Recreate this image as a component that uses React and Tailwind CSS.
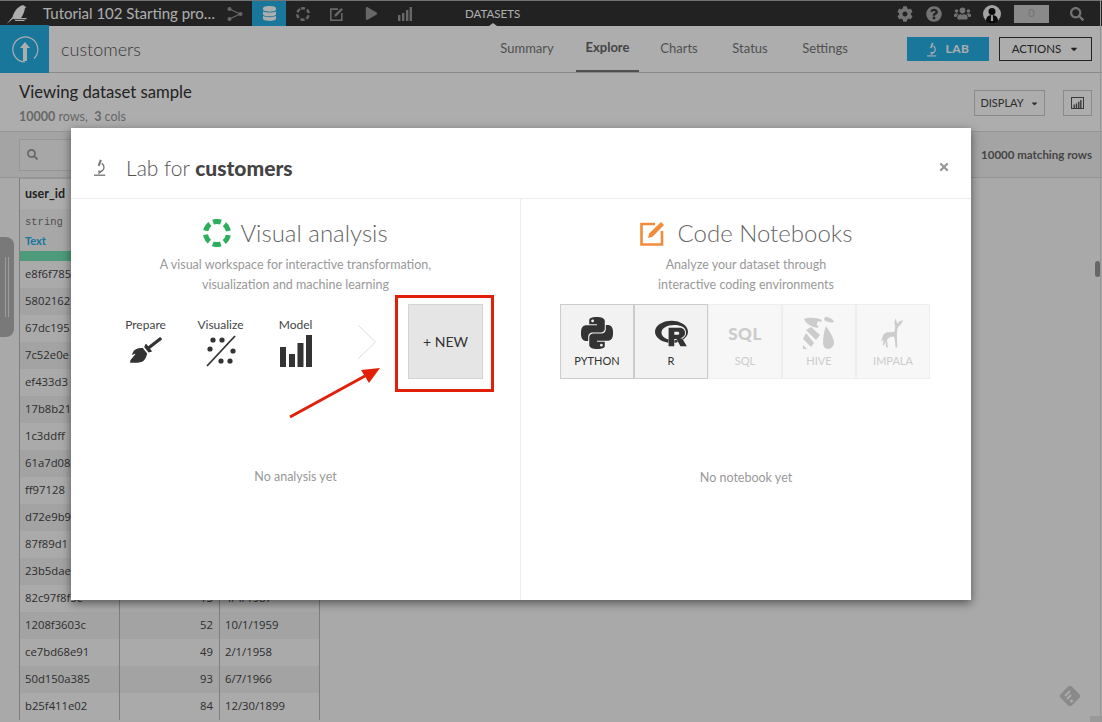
import React from "react";
import { FaDatabase, FaCog, FaQuestionCircle, FaUsers, FaSearch, FaBroom, FaPlay, FaCaretDown, FaTimes } from "react-icons/fa";
import { SiPython, SiR } from "react-icons/si";

const Micro = ({ className }) => (
  <svg viewBox="0 0 14 20" className={className} fill="none" stroke="currentColor" strokeWidth="1.6">
    <path d="M0 19h13" />
    <path d="M8 1 5.5 8" strokeWidth="2.4" />
    <path d="M9 5c3.2 2.2 3.4 6.400 1 8.500-1.500 1.300-3.500 1.300-5 .4" />
    <path d="M5 17c1.500-.6 3-1.500 4-3" />
  </svg>
);

const Ring = ({ className, color = "currentColor", width = 5 }) => (
  <svg viewBox="0 0 28 28" className={className} fill="none" stroke={color} strokeWidth={width}>
    <circle cx="14" cy="14" r="11.500" strokeDasharray="8 4.040" transform="rotate(-110 14 14)" />
  </svg>
);

const Note = ({ className, frame, pen, w = 2.6 }) => (
  <svg viewBox="0 0 26 26" className={className} fill="none">
    <path d="M15 4H1.500v20.500H22V11" stroke={frame} strokeWidth={w} />
    <path d="M8 18l1.200-4.500L21 2l3 3L12.500 16.800z" fill={pen} />
  </svg>
);

const Bars = ({ className }) => (
  <svg viewBox="0 0 32 32" className={className} fill="currentColor">
    <rect x="0" y="12" width="6" height="20" />
    <rect x="9" y="19" width="6" height="13" />
    <rect x="17.500" y="8" width="6" height="24" />
    <rect x="26" y="0" width="6" height="32" />
  </svg>
);

const Hive = ({ className }) => (
  <svg viewBox="0 0 32 32" className={className} fill="currentColor">
    <path d="M1 2c5-2 13-1.500 18 1l-4.500 8C9 10 3 7 1 2z" />
    <path d="M22 0c4 0 8 2 9 5-3 1-7 0-10-2z" />
    <path d="M23 9c4 6 8 12 8 17 0 3-3 6-6 6s-5-3-5-6c0-5 1-12 3-17z" />
    <path d="M3 13l5-3 9 8-4 5zM0 22l3-6 8 10-3 4zM0 28l4 4H0z" />
    <path d="M15 4l3 1-1.500 4-3-.8z" fill="#f7f7f7" />
  </svg>
);

const Impala = ({ className }) => (
  <svg viewBox="0 0 28 34" className={className} fill="currentColor">
    <path d="M17 0l2 6 3-3 4-1-3 5-3 3-1 3-.5 6 .5 15h-2l-1-10-1-3-5 1-3 3 1 9H6l-1-7-2 5-1-1 1-6-3 2 2-6c1-3 3-5 6-5 3 0 6 .5 8-1l.5-6-1-4z" />
  </svg>
);

const Flow = ({ className }) => (
  <svg viewBox="0 0 16 14" className={className} fill="none" stroke="currentColor" strokeWidth="1.200">
    <path d="M2.500 2 L13 7 L2.500 12" />
    <circle cx="2.500" cy="2" r="2" fill="currentColor" stroke="none" />
    <circle cx="13.500" cy="7" r="2" fill="currentColor" stroke="none" />
    <circle cx="2.500" cy="12" r="2" fill="currentColor" stroke="none" />
  </svg>
);

const TinyBars = ({ className }) => (
  <svg viewBox="0 0 14 14" className={className} fill="currentColor">
    <rect x="0" y="8" width="2.400" height="6" />
    <rect x="4" y="6" width="2.400" height="8" />
    <rect x="8" y="3" width="2.400" height="11" />
    <rect x="11.600" y="0" width="2.400" height="14" />
  </svg>
);

const Bird = ({ className }) => (
  <svg viewBox="0 0 22 20" className={className} fill="currentColor">
    <path d="M0 20 6 13c1-4 4-9 8-11 1.500-1 3.500-1 4.500.5L20 3l-1.500 1c-.5 3-1.500 6-3 8.500l-1 1.500h5.500v1.300H7.500L6.800 14.500z" />
    <path d="M9 16h9v1H8z" />
  </svg>
);

const Avatar = () => (
  <svg viewBox="0 0 18 18" className="w-[18px] h-[18px]">
    <circle cx="9" cy="9" r="9" fill="#f0f0f0" />
    <circle cx="9" cy="6.500" r="3.500" fill="#111" />
    <path d="M3 16c0-4 2.500-6 6-6s6 2 6 6l-3 2H6z" fill="#111" />
    <path d="M8.200 10h1.600l.4 6h-2.400z" fill="#f0f0f0" />
  </svg>
);

const rows = [
  ["e8f6f785"], ["5802162"], ["67dc195"], ["7c52e0e"], ["ef433d3"], ["17b8b21"], ["1c3ddff"], ["61a7d08"],
  ["ff97128"], ["d72e9b9"], ["87f89d1"], ["23b5dae"],
  ["82c97f8f5c", "13", "4/4/1987"], ["1208f3603c", "52", "10/1/1959"], ["ce7bd68e91", "49", "2/1/1958"],
  ["50d150a385", "93", "6/7/1966"], ["b25f411e02", "84", "12/30/1899"],
];

function Tile({ children, active }) {
  return (
    <div className={`w-[34px] h-full flex items-center justify-center ${active ? "bg-[#26b0e6] text-white" : "text-[#999]"}`}>
      {children}
    </div>
  );
}

function Tab({ w, active, children }) {
  return (
    <div className={`${w} h-full flex items-center justify-center text-[13px] ${active ? "font-bold text-[#666] border-b-2 border-[#777]" : "text-[#777]"}`}>
      {children}
    </div>
  );
}

function Kernel({ label, on, children }) {
  return (
    <div className={`w-[74px] h-[75px] flex flex-col items-center pt-[10px] ${on ? "bg-[#f2f2f2] border border-[#ccc] text-[#333]" : "bg-[#f7f7f7] border border-[#eee] text-[#ccc]"}`}>
      <div className="h-[36px] flex items-center justify-center">{children}</div>
      <div className="mt-[3px] text-[11px] leading-[14px]">{label}</div>
    </div>
  );
}

export default function App() {
  return (
    <div className="relative w-[1102px] h-[722px] overflow-hidden bg-[#fafafa] font-['Lato','Open_Sans',sans-serif]">
      <div className="h-[26px] border-t border-[#aaa] bg-[#333] flex items-center">
        <div className="w-[218px] flex items-center h-full">
          <Bird className="ml-[6px] w-[23px] h-[20px] text-white" />
          <span className="ml-[14px] text-[15px] text-white whitespace-nowrap">Tutorial 102 Starting pro…</span>
        </div>
        <Tile><Flow className="w-[16px] h-[14px]" /></Tile>
        <Tile active><FaDatabase className="w-[13px] h-[15px]" /></Tile>
        <Tile><Ring className="w-[14px] h-[14px]" width={5} /></Tile>
        <Tile><Note className="w-[14px] h-[14px]" frame="#999" pen="#999" w={3} /></Tile>
        <Tile><FaPlay className="w-[13px] h-[13px]" /></Tile>
        <Tile><TinyBars className="w-[14px] h-[14px]" /></Tile>
        <div className="relative ml-[43px] h-full flex items-center text-[11.500px] text-white">
          DATASETS
          <div className="absolute left-1/2 -translate-x-1/2 bottom-0 w-0 h-0 border-x-[4px] border-x-transparent border-b-[3px] border-b-white" />
        </div>
        <div className="ml-auto flex items-center h-full text-[#aaa]">
          <FaCog className="w-[16px] h-[16px]" />
          <FaQuestionCircle className="ml-[13px] w-[16px] h-[16px]" />
          <FaUsers className="ml-[12px] w-[17px] h-[15px]" />
          <div className="ml-[12px]"><Avatar /></div>
          <div className="ml-[13px] w-[35px] h-[18px] bg-[#ccc] text-[#aaa] text-[11px] flex items-center justify-center">0</div>
          <FaSearch className="ml-[21px] mr-[18px] w-[14px] h-[14px]" />
        </div>
      </div>

      <div className="h-[47px] flex items-center border-b border-[#ccc] bg-white">
        <div className="w-[49px] h-[48px] bg-[#26b0e6] flex items-center justify-center">
          <svg viewBox="0 0 28 28" className="w-[28px] h-[28px]" fill="none" stroke="#fff" strokeWidth="1.200">
            <path d="M23 23.500A12.500 12.500 0 1 0 14 27" />
            <path d="M14 7l-5 6h3v13h4V13h3z" fill="#fff" stroke="none" />
          </svg>
        </div>
        <span className="ml-[12px] text-[18px] font-light text-[#555]">customers</span>
        <div className="ml-auto h-full flex items-center">
          <div className="flex h-full">
            <Tab w="w-[98px]">Summary</Tab>
            <Tab w="w-[63px]" active>Explore</Tab>
            <Tab w="w-[80px]">Charts</Tab>
            <Tab w="w-[62px]">Status</Tab>
            <Tab w="w-[88px]">Settings</Tab>
          </div>
          <div className="ml-[38px] w-[82px] h-[24px] bg-[#26b0e6] text-white flex items-center justify-center gap-[9px] text-[12px] font-bold tracking-[0.5px]">
            <Micro className="w-[10px] h-[15px]" /> LAB
          </div>
          <div className="ml-[10px] mr-[10px] w-[93px] h-[24px] border border-[#333] text-[#333] flex items-center justify-center gap-[8px] text-[11.500px]">
            ACTIONS <FaCaretDown className="w-[10px] h-[10px]" />
          </div>
        </div>
      </div>

      <div className="h-[58px] flex justify-between pl-[19px] pr-[10px] bg-white">
        <div className="pt-[7px]">
          <div className="text-[16.700px] leading-[24px] text-[#333]">Viewing dataset sample</div>
          <div className="mt-[5px] text-[12.500px] leading-[16px] text-[#999]"><b>10000</b> rows,&nbsp; <b>3</b> cols</div>
        </div>
        <div className="flex items-start pt-[17px]">
          <div className="w-[71px] h-[26px] border border-[#ccc] text-[#444] flex items-center justify-center gap-[6px] text-[11px]">
            DISPLAY <FaCaretDown className="w-[9px] h-[9px]" />
          </div>
          <div className="ml-[18px] w-[29px] h-[26px] border border-[#ccc] flex items-center justify-center">
            <div className="w-[13px] h-[12px] border border-[#555] flex items-end justify-center text-[#555]"><TinyBars className="w-[9px] h-[8px]" /></div>
          </div>
        </div>
      </div>

      <div className="h-[47px] border-y border-[#ddd] bg-[#f2f2f2] flex items-center justify-between pl-[19px] pr-[10px]">
        <div className="w-[200px] h-[32px] border border-[#ddd] bg-[#f7f7f7] flex items-center pl-[7px] text-[#999]">
          <FaSearch className="w-[11px] h-[11px]" />
        </div>
        <span className="text-[11.500px] font-bold text-[#666]">10000 matching rows</span>
      </div>

      <div className="ml-[19px] w-[301px] border-l border-[#bbb]">
        <div className="grid grid-cols-[100px_100px_100px] bg-white">
          <div className="border-r border-[#bbb] h-[73px] border-t border-t-[#ddd]">
            <div className="h-[30px] pl-[5px] flex items-center text-[12.500px] font-bold text-[#333] bg-[#fff]">user_id</div>
            <div className="h-[43px] bg-[#f7f7f7] pl-[5px] pt-[5px]">
              <div className="font-['Liberation_Mono',monospace] text-[10.500px] leading-[16px] text-[#777]">string</div>
              <div className="mt-[2px] text-[11px] font-bold leading-[18px] text-[#26b0e6]">Text</div>
            </div>
          </div>
          <div className="border-r border-[#bbb]" />
          <div className="border-r border-[#bbb]" />
          <div className="col-span-3 h-[10px] bg-[#74e5b6]" />
        </div>
        {rows.map((r, i) => (
          <div key={i} className={`grid grid-cols-[100px_100px_100px] h-[27px] text-[11.300px] leading-[26px] text-[#444] font-['Open_Sans',sans-serif] ${i % 2 ? "bg-[#f0f0f0]" : "bg-[#fbfbfb]"}`}>
            <div className="pl-[5px] border-r border-[#bbb] overflow-hidden">{r[0]}</div>
            <div className="pr-[6px] text-right border-r border-[#bbb]">{r[1]}</div>
            <div className="pl-[5px] border-r border-[#bbb]">{r[2]}</div>
          </div>
        ))}
      </div>

      {/* grip, scrollbar and badge lying over the page */}
      <div className="absolute left-0 top-[237px] w-[14px] h-[100px] bg-[#b3b3b3] rounded-r-[8px] flex justify-center gap-[2px] pt-[20px]">
        <div className="w-px h-[60px] bg-white/70" />
        <div className="w-px h-[60px] bg-white/70" />
      </div>
      <div className="absolute right-[1px] top-0 bottom-0 w-px bg-[#ddd]" />
      <div className="absolute right-[2px] top-[261px] w-[5px] h-[16px] rounded-full bg-[#999]" />
      <div className="absolute right-0 bottom-0 w-[12px] h-[6px] bg-[#e2e2e2]" />
      <svg viewBox="0 0 26 26" className="absolute left-[1057px] top-[683px] w-[26px] h-[26px]">
        <rect x="5" y="5" width="16" height="16" rx="3" transform="rotate(45 13 13)" fill="#ccc" />
        <path d="M8 13l5-5M10 16l4-4" stroke="#fff" strokeWidth="1.800" />
        <circle cx="14.500" cy="18" r="1.500" fill="#fff" />
      </svg>

      <div className="absolute inset-0 bg-black/[0.32]" />

      {/* modal */}
      <div className="absolute left-[71px] top-[128px] w-[900px] h-[472px] bg-white shadow-[0_3px_9px_rgba(0,0,0,0.5)] flex flex-col">
        <div className="h-[71px] border-b border-[#eee] flex items-center pl-[23px] pr-[21px] pt-[9px] shrink-0">
          <Micro className="w-[12px] h-[19px] text-[#777]" />
          <span className="ml-[20px] text-[21px] font-light text-[#555]">Lab for <b className="font-black text-[#444]">customers</b></span>
          <FaTimes className="ml-auto -mt-[2px] w-[12px] h-[12px] text-[#999]" />
        </div>
        <div className="flex flex-1">
          <div className="w-[450px] border-r border-[#eee] pt-[17px] flex flex-col">
            <div className="h-[34px] flex items-center justify-center gap-[9px]">
              <Ring className="w-[28px] h-[28px]" color="#2cae5a" />
              <span className="text-[24px] font-light text-[#666]">Visual analysis</span>
            </div>
            <div className="mt-[5px] text-center text-[12.500px] leading-[20px] text-[#999]">
              A visual workspace for interactive transformation,<br />visualization and machine learning
            </div>
            <div className="mt-[9px] ml-[37px] flex items-start">
              <div className="w-[75px] flex flex-col items-center pt-[13px]">
                <span className="text-[12px] leading-[16px] text-[#444]">Prepare</span>
                <FaBroom className="mt-[2px] w-[32px] h-[30px] text-[#333]" />
              </div>
              <div className="w-[75px] flex flex-col items-center pt-[13px]">
                <span className="text-[12px] leading-[16px] text-[#444]">Visualize</span>
                <svg viewBox="0 0 30 32" className="mt-[2px] w-[30px] h-[32px] text-[#333]" fill="currentColor">
                  <path d="M1 31 29 1" stroke="currentColor" strokeWidth="1.800" />
                  <circle cx="4" cy="14" r="2.600" /><circle cx="7" cy="5" r="2.600" /><circle cx="16" cy="5" r="2.600" />
                  <circle cx="27" cy="16" r="2.600" /><circle cx="15" cy="26" r="2.600" /><circle cx="24" cy="26" r="2.600" />
                </svg>
              </div>
              <div className="w-[75px] flex flex-col items-center pt-[13px]">
                <span className="text-[12px] leading-[16px] text-[#444]">Model</span>
                <Bars className="mt-[2px] w-[32px] h-[32px] text-[#333]" />
              </div>
              <svg viewBox="0 0 18 34" className="ml-[25px] mt-[21px] w-[18px] h-[34px]" fill="none" stroke="#ddd"><path d="M0.500 0.500 17.500 17 0.500 33.500" /></svg>
              <div className="ml-[32px] w-[75px] h-[75px] bg-[#e5e5e5] border border-[#d4d4d4] flex items-center justify-center text-[14px] text-[#333]">+ NEW</div>
            </div>
            <div className="mt-[88px] text-center text-[12.500px] leading-[20px] text-[#999]">No analysis yet</div>
          </div>
          <div className="flex-1 pt-[17px] flex flex-col">
            <div className="h-[34px] flex items-center justify-center gap-[12px]">
              <Note className="w-[26px] h-[26px]" frame="#f28c38" pen="#f28c38" />
              <span className="text-[24px] font-light text-[#666]">Code Notebooks</span>
            </div>
            <div className="mt-[5px] text-center text-[12.500px] leading-[20px] text-[#999]">
              Analyze your dataset through<br />interactive coding environments
            </div>
            <div className="mt-[9px] ml-[39px] flex">
              <Kernel label="PYTHON" on><SiPython className="w-[32px] h-[32px]" /></Kernel>
              <Kernel label="R" on><SiR className="w-[33px] h-[33px]" /></Kernel>
              <Kernel label="SQL"><span className="text-[17px] font-black leading-none tracking-[0.5px]">SQL</span></Kernel>
              <Kernel label="HIVE"><Hive className="w-[32px] h-[32px]" /></Kernel>
              <Kernel label="IMPALA"><Impala className="w-[24px] h-[32px]" /></Kernel>
            </div>
            <div className="mt-[89px] text-center text-[12.500px] leading-[20px] text-[#999]">No notebook yet</div>
          </div>
        </div>
      </div>

      {/* annotation */}
      <div className="absolute left-[395px] top-[295px] w-[99px] h-[97px] border-[3px] border-[#e2200a]" />
      <svg viewBox="0 0 100 60" className="absolute left-[285px] top-[362px] w-[100px] h-[60px]">
        <path d="M5 55 80 14" stroke="#e2200a" strokeWidth="3" />
        <path d="M76 8 95 6 84 21z" fill="#e2200a" />
      </svg>
    </div>
  );
}
